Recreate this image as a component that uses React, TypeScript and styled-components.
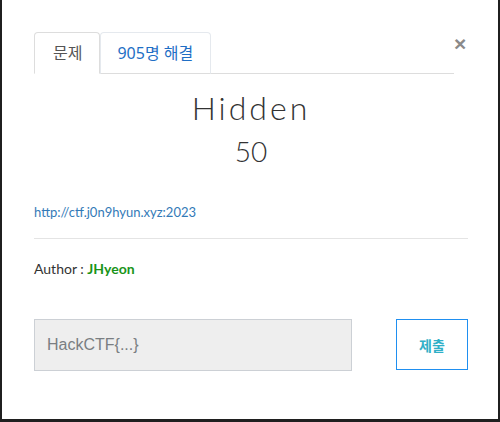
import React from "react";
import styled, { createGlobalStyle } from "styled-components";

const Global = createGlobalStyle`
  html, body { margin: 0; padding: 0; background: #1f1f1f; }
  body { width: 500px; height: 422px; overflow: hidden; }
`;

const Frame = styled.div`
  width: 500px;
  height: 422px;
  padding-left: 2px;
  box-sizing: border-box;
  background: #1f1f1f;
`;

const Modal = styled.div`
  width: 496px;
  height: 419px;
  background: #fff;
  box-sizing: border-box;
  padding: 32px 30px 0 32px;
  font-family: Lato, "Noto Sans CJK KR", sans-serif;
  color: #333;
`;

const Header = styled.div`
  display: flex;
  align-items: flex-start;
`;

const TabList = styled.div`
  flex: 1;
  display: flex;
  border-bottom: 1px solid #ddd;
  max-width: 420px;
`;

const Tab = styled.div<{ $active?: boolean }>`
  padding: 10px 17px 10px 18px;
  line-height: 20px;
  font-size: 16px;
  font-family: "Noto Sans", "Noto Sans CJK KR", sans-serif;
  border: 1px solid ${(p) => (p.$active ? "#ddd" : "#e5e9ee")};
  border-bottom: 1px solid ${(p) => (p.$active ? "#fff" : "#ddd")};
  margin-bottom: -1px;
  border-radius: 4px 4px 0 0;
  color: ${(p) => (p.$active ? "#555" : "#1f6fc5")};
  background: #fff;
  & + & { padding-left: 16px; }
`;

const Close = styled.div`
  margin-left: 0;
  width: 12px;
  font-size: 21px;
  line-height: 24px;
  font-weight: 700;
  color: #8a8a8a;
  font-family: "Liberation Sans", sans-serif;
  text-align: right;
`;

const Title = styled.h3`
  margin: 14px 0 0;
  text-align: center;
  font-weight: 300;
  font-size: 32px;
  line-height: 40px;
  letter-spacing: 3px;
  color: #333;
`;

const Points = styled.h4`
  margin: 3px 0 0;
  text-align: center;
  font-weight: 300;
  font-size: 28px;
  line-height: 40px;
  color: #333;
`;

const Link = styled.a`
  display: block;
  margin-top: 31px;
  font-size: 13px;
  line-height: 20px;
  color: #337ab7;
  text-decoration: none;
`;

const Rule = styled.hr`
  margin: 16px 0 20px;
  border: 0;
  border-top: 1px solid #e4e4e4;
`;

const Author = styled.div`
  font-size: 14px;
  line-height: 20px;
  color: #333;
`;

const Name = styled.span`
  color: #199419;
  font-weight: 700;
  font-size: 14px;
`;

const Row = styled.div`
  display: flex;
  margin-top: 40px;
  align-items: flex-start;
`;

const Input = styled.input`
  width: 318px;
  height: 52px;
  box-sizing: border-box;
  background: #eee;
  border: 1px solid #ccd0d5;
  padding: 0 12px;
  font-size: 16px;
  font-family: "Liberation Sans", Arial, sans-serif;
  color: #555;
  outline: none;
  &::placeholder { color: #7a7e82; }
`;

const Submit = styled.button`
  margin-left: 44px;
  width: 72px;
  height: 51px;
  box-sizing: border-box;
  background: #fff;
  border: 1px solid #1f8ff0;
  color: #2fb0c8;
  font-weight: 700;
  font-size: 14px;
  font-family: "Noto Sans CJK KR", sans-serif;
  padding: 0;
`;

export default function App() {
  return (
    <Frame>
      <Global />
      <Modal>
        <Header>
          <TabList>
            <Tab $active>문제</Tab>
            <Tab>905명 해결</Tab>
          </TabList>
          <Close>×</Close>
        </Header>
        <Title>Hidden</Title>
        <Points>50</Points>
        <Link href="#">http://ctf.j0n9hyun.xyz:2023</Link>
        <Rule />
        <Author>
          Author : <Name>JHyeon</Name>
        </Author>
        <Row>
          <Input placeholder="HackCTF{...}" />
          <Submit>제출</Submit>
        </Row>
      </Modal>
    </Frame>
  );
}
